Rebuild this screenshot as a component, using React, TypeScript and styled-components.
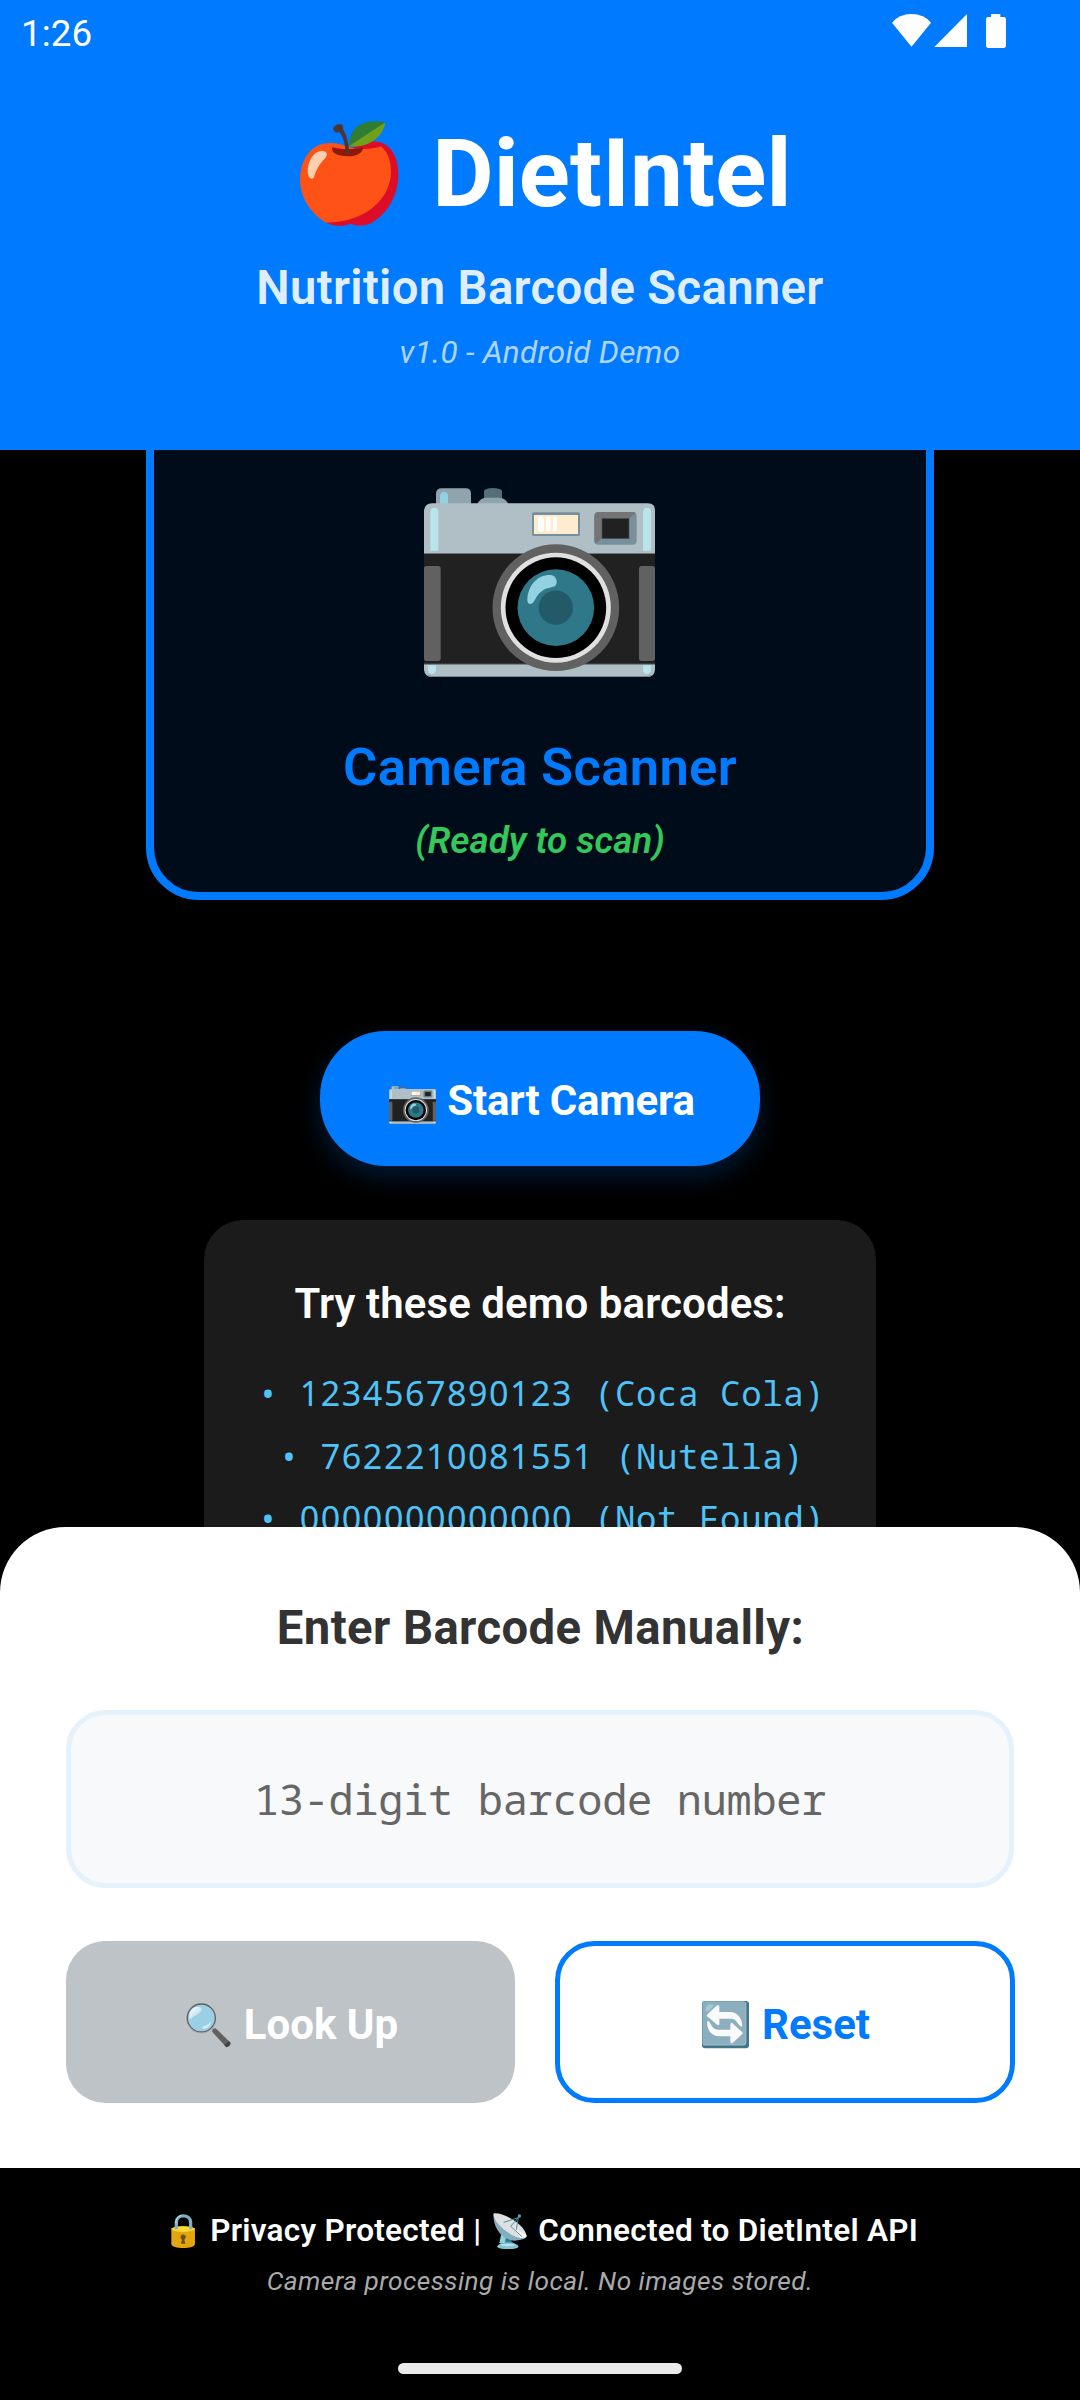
import React, { useState } from "react";
import styled, { createGlobalStyle, css } from "styled-components";

const GlobalStyle = createGlobalStyle`
  * { box-sizing: border-box; }
  body { margin: 0; background: #000; }
`;

const sans = `Roboto, "Noto Sans", sans-serif`;
const mono = `"Droid Sans Mono", "Noto Sans Mono", "DejaVu Sans Mono", monospace`;

const Screen = styled.div`
  width: 1080px;
  height: 2400px;
  display: flex;
  flex-direction: column;
  overflow: hidden;
  background: #000;
  font-family: ${sans};
  color: #fff;
`;

const Icon = styled.svg<{ $w: number; $h: number }>`
  display: block;
  flex: none;
  width: ${(p) => p.$w}px;
  height: ${(p) => p.$h}px;
`;

/* Header */

const Header = styled.header`
  height: 450px;
  flex: none;
  display: flex;
  flex-direction: column;
  align-items: center;
  background: #007aff;
`;

const StatusBar = styled.div`
  width: 100%;
  height: 66px;
  padding: 0 74px 0 21px;
  display: flex;
  align-items: flex-start;
  justify-content: space-between;
  font-size: 36.75px;
  line-height: 68px;
  letter-spacing: 0.1px;
`;

const StatusIcons = styled.div`
  height: 66px;
  display: flex;
  align-items: flex-start;
  padding-top: 13px;
`;

const AppTitle = styled.h1`
  margin: 53px 0 0;
  padding-left: 12px;
  display: flex;
  align-items: center;
  gap: 33px;
  font-size: 94.5px;
  line-height: 110px;
  font-weight: 700;
  letter-spacing: 0.15px;
`;

const Subtitle = styled.p`
  margin: 31px 0 0;
  font-size: 47.25px;
  line-height: 56px;
  font-weight: 600;
  letter-spacing: 0.33px;
  color: rgba(255, 255, 255, 0.9);
`;

const Version = styled.p`
  margin: 18px 0 0;
  font-size: 31.5px;
  line-height: 38px;
  font-style: italic;
  letter-spacing: 0.28px;
  color: rgba(255, 255, 255, 0.7);
`;

/* Scrolled content */

const Content = styled.main`
  height: 1077px;
  flex: none;
  display: flex;
  flex-direction: column;
  align-items: center;
  overflow: hidden;
`;

const ScannerCard = styled.section`
  width: 788px;
  height: 525px;
  flex: none;
  margin-top: -75px;
  padding-top: 105px;
  display: flex;
  flex-direction: column;
  align-items: center;
  border: 8px solid #007aff;
  border-radius: 52.5px;
  background: rgba(0, 122, 255, 0.1);
`;

const ScannerArt = styled.div`
  padding-right: 1px;
`;

const ScannerTitle = styled.h2`
  margin: 59px 0 0;
  font-size: 52.5px;
  line-height: 62px;
  font-weight: 600;
  letter-spacing: 0.35px;
  color: #007aff;
`;

const ScannerState = styled.p`
  margin: 21px 0 0;
  font-size: 36.75px;
  line-height: 44px;
  font-weight: 600;
  font-style: italic;
  letter-spacing: 0;
  color: #34c759;
`;

const StartButton = styled.button`
  width: 440px;
  height: 135px;
  flex: none;
  margin-top: 131px;
  padding: 4px 0 0 4px;
  display: flex;
  align-items: center;
  justify-content: center;
  gap: 11px;
  border: 0;
  border-radius: 65.6px;
  background: #007aff;
  box-shadow: 0 10px 26px rgba(0, 122, 255, 0.22);
  font: 700 42px/50px ${sans};
  letter-spacing: -0.2px;
  color: #fff;
`;

const ButtonArt = styled.span`
  padding-top: 8px;
`;

const DemoPanel = styled.section`
  width: 672px;
  height: 380px;
  flex: none;
  margin-top: 54px;
  padding-top: 59px;
  border-radius: 39.4px;
  background: #1b1b1b;
  text-align: center;
`;

const DemoTitle = styled.h3`
  margin: 0 0 33px;
  font-size: 42px;
  line-height: 50px;
  font-weight: 600;
  letter-spacing: 0.1px;
`;

const DemoCode = styled.div`
  height: 62.7px;
  padding-left: 3px;
  font-family: ${mono};
  font-size: 34.1px;
  line-height: 62.7px;
  letter-spacing: 0.57px;
  white-space: pre;
  color: #4fc3f7;
`;

/* Plain, undotted zeros, spaced to the pitch of the monospaced text. */
const Digits = styled.span`
  font-family: "Noto Sans", "Open Sans", sans-serif;
  letter-spacing: 1.52px;
`;

/* Manual entry */

const Sheet = styled.section`
  height: 641px;
  flex: none;
  padding: 73px 65px 0 66px;
  border-radius: 65.6px 65.6px 0 0;
  background: #fff;
`;

const SheetTitle = styled.h2`
  margin: 0;
  font-size: 47.25px;
  line-height: 56px;
  font-weight: 700;
  letter-spacing: 0.4px;
  text-align: center;
  color: #333;
`;

const BarcodeInput = styled.input`
  display: block;
  width: 948px;
  height: 178px;
  margin-top: 54px;
  padding: 0 40px 1px;
  border: 5.25px solid #e3f2fd;
  border-radius: 39.4px;
  outline: 0;
  background: #f8f9fb;
  font-family: ${mono};
  font-size: 42px;
  letter-spacing: -0.33px;
  text-align: center;
  color: #333;
  &::placeholder {
    color: #666;
    opacity: 1;
  }
`;

const Actions = styled.div`
  margin-top: 53px;
  display: flex;
  gap: 40px;
`;

const Action = styled.button<{ $outline?: boolean }>`
  height: 162px;
  padding: 6px 0 0 2px;
  display: flex;
  align-items: center;
  justify-content: center;
  gap: 13px;
  border-radius: 39.4px;
  font: 700 42px/50px ${sans};
  ${(p) =>
    p.$outline
      ? css`
          width: 460px;
          border: 5.25px solid #007aff;
          background: #fff;
          color: #007aff;
        `
      : css`
          width: 449px;
          border: 0;
          background: #bdc3c7;
          color: #fff;
        `}
`;

/* Footer */

const Footer = styled.footer`
  flex: 1;
  padding-top: 44px;
  display: flex;
  flex-direction: column;
  align-items: center;
`;

const FooterLine = styled.div`
  padding-left: 9px;
  display: flex;
  align-items: center;
  font-size: 31.5px;
  line-height: 38px;
  font-weight: 600;
  letter-spacing: 0.27px;
  white-space: pre;
`;

const FooterText = styled.span<{ $left: number; $right?: number }>`
  padding-left: ${(p) => p.$left}px;
  padding-right: ${(p) => p.$right ?? 0}px;
`;

const FooterNote = styled.p`
  margin: 14px 0 0;
  font-size: 26.25px;
  line-height: 34px;
  font-style: italic;
  letter-spacing: 0.44px;
  color: #aaa;
`;

const HomeBar = styled.div`
  width: 284px;
  height: 11px;
  margin-top: 65px;
  border-radius: 6px;
  background: #ebebeb;
`;

const Apple = () => (
  <Icon $w={98.7} $h={105.3} viewBox="60 62 296 316" aria-hidden>
    <path
      fill="#db0d28"
      d="M140 368C165 379 190 379 210 370C232 378 258 378 278 366C325 337 355 285 355 222C355 160 325 123 278 123C262 123 250 128 238 132L130 190L120 350Z"
    />
    <path
      fill="#ff5217"
      d="M60 240C60 175 95 128 150 128C172 128 182 133 203 138C222 148 275 150 302 138C325 155 333 185 333 215C333 285 270 365 138 367C95 345 60 290 60 240Z"
    />
    <path fill="#db0d28" d="M160 140C175 148 225 150 245 138L250 145L200 160L158 150Z" />
    <path
      fill="#8c1a0c"
      d="M157 141C170 149 232 150 248 139C252 150 240 168 203 168C172 168 152 157 157 141Z"
    />
    <path
      fill="#513430"
      d="M160 88C158 79 170 70 181 72C189 73 191 80 189 87C201 105 206 132 208 159Q203 163 197 159C196 131 189 107 178 95C170 98 162 96 160 88Z"
    />
    <path fill="#2e7d32" d="M207 137C207 96 233 51 316 66L310 83L214 138Z" />
    <path fill="#6f9f1b" d="M316 66C310 109 267 145 206 138Z" />
    <path
      fill="#ffd0b0"
      d="M84 222C80 188 99 151 127 152C142 153 144 164 135 174C116 194 108 211 102 230C98 239 86 236 84 222Z"
    />
  </Icon>
);

const Camera = ({ width, height }: { width: number; height: number }) => (
  <Icon $w={width} $h={height} viewBox="72 84 693 567" preserveAspectRatio="none" aria-hidden>
    <path fill="#546e7a" d="M252 120V92Q258 84 278 84Q300 84 306 92V120Z" />
    <path fill="#90a4ae" d="M232 133Q240 113 258 113H298Q317 113 325 133Z" />
    <path fill="#90a4ae" d="M108 134V102Q108 85 125 85H197Q213 85 213 101V134Z" />
    <path fill="#94d1e0" d="M120 134V108Q121 96 132 96Q144 96 144 108V134Z" />
    <path fill="#b0bec5" d="M72 283V152Q74 131 96 130H744Q765 131 765 150V283Z" />
    <rect x="72" y="280" width="693" height="336" fill="#212121" />
    <rect x="72" y="279" width="693" height="3" fill="#6c7579" />
    <path fill="#b0bec5" d="M72 613H765V629Q763 650 743 651H95Q74 650 72 629Z" />
    <path fill="#78878e" d="M72 611H765V615H72ZM80 644Q86 650 95 651H743Q753 650 759 644L743 648H95Z" />
    <rect x="72" y="318" width="50" height="285" rx="8" fill="#616161" />
    <rect x="717" y="318" width="48" height="285" rx="8" fill="#616161" />
    <path fill="#b9e4ea" d="M91 272V154Q92 143 103 143Q114 143 115 154V272Z" />
    <path fill="#b9e4ea" d="M729 272V154Q731 143 741 143Q752 143 753 154V272Z" />
    <path fill="#b9e4ea" d="M84 616H108V631Q106 642 96 642Q86 642 84 631Z" />
    <path fill="#b9e4ea" d="M729 616H753V631Q751 642 741 642Q731 642 729 631Z" />
    <rect x="396" y="157" width="144" height="71" rx="5" fill="#78909c" />
    <rect x="402" y="165" width="132" height="57" fill="#ffeccf" />
    <rect x="414" y="170" width="18" height="45" rx="8" fill="#fff" />
    <rect x="438" y="170" width="13" height="45" rx="6" fill="#fff" />
    <rect x="459" y="170" width="11" height="45" rx="5" fill="#fff" />
    <rect x="583" y="156" width="127" height="98" rx="12" fill="#78909c" />
    <path fill="#757575" d="M587 250Q583 247 583 240V168Q584 157 596 156H698Q703 156 707 159L686 176L606 235Z" />
    <rect x="605" y="174" width="83" height="63" fill="#424f55" />
    <rect x="607" y="177" width="79" height="57" fill="#212121" />
    <circle cx="467.500" cy="443" r="190" fill="#616161" />
    <circle cx="467.500" cy="443" r="165" fill="#e0e0e0" />
    <circle cx="467.500" cy="443" r="151" fill="#000" />
    <circle cx="467.500" cy="443" r="115" fill="#2f7889" />
    <circle cx="467.500" cy="443" r="51.500" fill="#225b67" />
    <path
      fill="#94d1e0"
      d="M382 418C384 376 412 344 452 345C470 346 476 370 464 379C454 384 441 383 427 392C408 405 408 419 398 429C390 436 381 431 382 418Z"
    />
  </Icon>
);

const Magnifier = () => (
  <Icon $w={46} $h={45.7} viewBox="437 277 138 137" aria-hidden>
    <defs>
      <linearGradient id="shine" x1="0" y1="0" x2="1" y2="1">
        <stop offset="0" stopColor="#fff" />
        <stop offset="1" stopColor="#fff" stopOpacity="0.15" />
      </linearGradient>
    </defs>
    <path stroke="#9e9e9e" strokeWidth="6" d="M514 350L526 362" />
    <path fill="#616161" d="M519 367Q517 358 529 356L574 399L561 413Z" />
    <path fill="#424242" d="M555 406L569 395L574 400Q572 411 561 413Z" />
    <circle cx="485" cy="325" r="45" fill="#b4b4b4" />
    <circle cx="486" cy="325" r="42" fill="#9acfe6" stroke="#616161" strokeWidth="4" />
    <path fill="none" stroke="#a8a8a8" strokeWidth="3" d="M446 344A44 44 0 0 0 528 340" />
    <path
      fill="url(#shine)"
      d="M450 324C448 307 460 291 475 291C488 292 489 300 484 306C475 315 463 319 455 327Q451 330 450 324Z"
    />
    <path fill="#d5edf7" d="M489 351Q507 348 515 334Q516 350 497 357Q489 358 489 351Z" />
  </Icon>
);

const Refresh = () => (
  <Icon $w={47} $h={47.3} viewBox="485 272 141 142" aria-hidden>
    <rect x="485" y="272" width="141" height="142" rx="9" fill="#427687" />
    <rect x="486" y="273" width="131" height="132" rx="8" fill="#8cafbf" />
    <path
      fill="none"
      stroke="#b4ccd5"
      strokeWidth="2"
      d="M488 404H609Q617 404 617 396V276"
    />
    <path fill="#a0cad8" d="M496 301Q493 282 516 281Q523 285 513 294Q503 309 496 301Z" />
    <path
      fill="#fafafa"
      d="M500 313L530 285Q536 282 537 289V305H568C590 305 606 322 606 349C599 350 596 342 591 337C584 326 578 325 565 325H537V341Q535 348 529 342L500 318Q498 315 500 313Z"
    />
    <path
      fill="#fafafa"
      d="M606 371L577 398Q571 401 570 395V378H537C515 378 500 361 500 334C504 330 507 334 511 341C519 356 525 358 539 358H570V342Q572 334 578 340L606 366Q608 369 606 371Z"
    />
  </Icon>
);

const Lock = () => (
  <Icon $w={24.3} $h={34} viewBox="32 42 73 102" aria-hidden>
    <path
      fill="none"
      stroke="#82aec0"
      strokeWidth="10"
      d="M48 86V67C48 41 91 41 91 67V86"
    />
    <path fill="none" stroke="#b9e4ea" strokeWidth="3" d="M46 70Q47 50 63 46" />
    <path fill="#e2a610" d="M33 85H104V132C104 148 33 148 33 132Z" />
    <ellipse cx="68.500" cy="87" rx="35.500" ry="8.500" fill="#ffca28" />
    <path fill="#fdd835" d="M38 84Q68 74 99 84V91Q68 99 38 91Z" />
    <path fill="none" stroke="#82aec0" strokeWidth="9" d="M48 78V88M91 78V88" />
    <path fill="#6d4c1e" d="M61 114A8 8 0 1 1 76 114L72 119L75 131H62L65 119Z" />
  </Icon>
);

const Dish = () => (
  <Icon $w={34} $h={36} viewBox="1003 36 102 108" aria-hidden>
    <path fill="#5aa0b2" d="M1028 94L1058 103V122L1072 130H1025Z" />
    <path fill="#2f7889" d="M1043 100H1058V122H1040Z" />
    <path fill="#94d1e0" d="M1028 99L1042 108L1038 126H1022Z" />
    <path fill="#82c3d3" d="M1015 137Q1018 126 1047 126Q1077 126 1080 137Q1077 144 1047 144Q1019 144 1015 137Z" />
    <path fill="#b9e4ea" d="M1020 132Q1047 124 1073 132Q1047 139 1020 132Z" />
    <path fill="#82aec0" d="M1005 38C1002 70 1020 112 1065 119C1084 119 1104 113 1104 106Z" />
    <path fill="#e0e0e0" d="M1006 37C1036 34 1100 72 1104 105C1100 116 1071 112 1045 92C1015 72 1000 44 1006 37Z" />
    <path fill="#f5f5f5" d="M1060 77L1104 103Q1102 113 1085 111Z" />
    <path fill="none" stroke="#4b92a6" strokeWidth="3" d="M1056 76L1084 44M1035 64L1079 50M1056 76L1090 107M1079 50L1073 86" />
    <circle cx="1082" cy="45" r="5" fill="#5aa0b2" />
  </Icon>
);

const products = [
  { code: "1234567890123", name: "Coca Cola" },
  { code: "7622210081551", name: "Nutella" },
  { code: "0000000000000", name: "Not Found" },
];

export default function App() {
  const [barcode, setBarcode] = useState("");
  return (
    <Screen>
      <GlobalStyle />
      <Header>
        <StatusBar>
          <span>1:26</span>
          <StatusIcons>
            <Icon $w={114} $h={36} viewBox="36 24 342 108" fill="#fff" aria-hidden>
              <path d="M36 53Q57 27 94.500 27Q132 27 153 53L94.500 125Z" />
              <path d="M163 126L261 27V126Z" />
              <path d="M333 36V27H361V36H371Q378 36 378 43V121Q378 129 371 129H325Q318 129 318 121V43Q318 36 325 36Z" />
            </Icon>
          </StatusIcons>
        </StatusBar>
        <AppTitle>
          <Apple />
          <span>DietIntel</span>
        </AppTitle>
        <Subtitle>Nutrition Barcode Scanner</Subtitle>
        <Version>v1.0 - Android Demo</Version>
      </Header>
      <Content>
        <ScannerCard>
          <ScannerArt>
            <Camera width={231} height={189} />
          </ScannerArt>
          <ScannerTitle>Camera Scanner</ScannerTitle>
          <ScannerState>(Ready to scan)</ScannerState>
        </ScannerCard>
        <StartButton>
          <ButtonArt>
            <Camera width={47} height={38} />
          </ButtonArt>
          <span>Start Camera</span>
        </StartButton>
        <DemoPanel>
          <DemoTitle>Try these demo barcodes:</DemoTitle>
          {products.map(({ code, name }) => (
            <DemoCode key={code}>
              {"• "}
              <Digits>{code}</Digits>
              {` (${name})`}
            </DemoCode>
          ))}
        </DemoPanel>
      </Content>
      <Sheet>
        <SheetTitle>Enter Barcode Manually:</SheetTitle>
        <BarcodeInput
          value={barcode}
          placeholder="13-digit barcode number"
          onChange={(e) => setBarcode(e.target.value)}
        />
        <Actions>
          <Action>
            <Magnifier />
            <span>Look Up</span>
          </Action>
          <Action $outline onClick={() => setBarcode("")}>
            <Refresh />
            <span>Reset</span>
          </Action>
        </Actions>
      </Sheet>
      <Footer>
        <FooterLine>
          <Lock />
          <FooterText $left={15} $right={12}>Privacy Protected |</FooterText>
          <Dish />
          <FooterText $left={11}>Connected to DietIntel API</FooterText>
        </FooterLine>
        <FooterNote>Camera processing is local. No images stored.</FooterNote>
        <HomeBar />
      </Footer>
    </Screen>
  );
}
